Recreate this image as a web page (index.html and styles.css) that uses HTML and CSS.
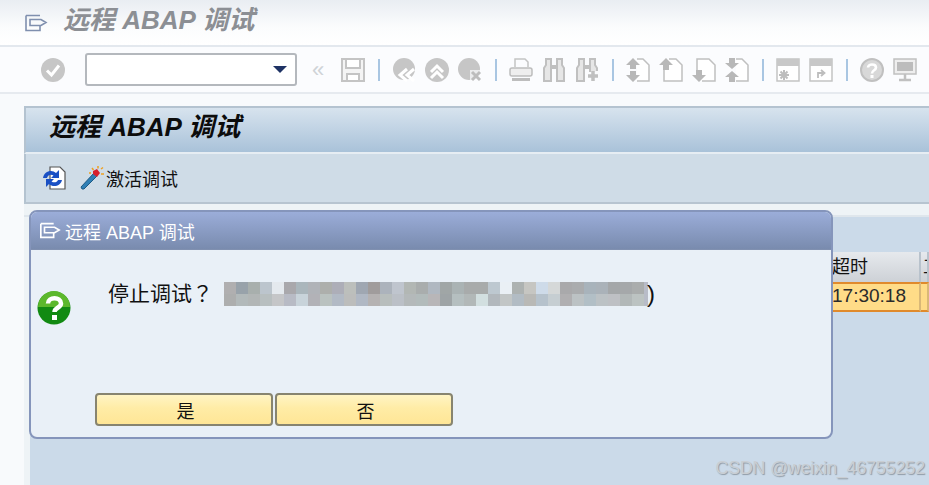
FILE: index.html
```html
<!DOCTYPE html>
<html lang="zh">
<head>
  <meta charset="UTF-8" />
  <title>远程 ABAP 调试</title>
  <link rel="stylesheet" href="styles.css">
</head>
<body>
  <div class="title-bar">
    <svg class="title-icon" viewBox="0 0 24 18" width="24" height="18"><path d="M2 1.5H16M2 1.5V16.5H16V12M6 5.500H17L22 8.500L17 11.500H6Z" fill="none" stroke="#7f8fae" stroke-width="1.600"/></svg>
    <span class="title-text">远程 ABAP 调试</span>
  </div>

  <div class="sys-toolbar">
    <svg class="tb" viewBox="0 0 24 24"><circle cx="12" cy="12" r="12" fill="#c6c6c6"/><path d="M6 12.500L10.500 17L18 7.500" fill="none" stroke="#fff" stroke-width="3"/></svg>
    <div class="combo"><span class="combo-arrow"></span></div>
    <span class="back-mark">«</span>
    <svg class="tb" viewBox="0 0 24 24"><path d="M1 1H23V23H1Z" fill="#f4f4f4" stroke="#c4c4c4" stroke-width="2"/><path d="M5 1H19V10H5ZM6 16H18V23H6Z" fill="#fff" stroke="#c4c4c4" stroke-width="2"/></svg>
    <span class="sep"></span>
    <svg class="tb" viewBox="0 0 24 24"><circle cx="12" cy="11" r="11" fill="#c6c6c6"/><path d="M15 11L8 17L15 23M22 11L15 17L22 23" fill="none" stroke="#fff" stroke-width="3"/></svg>
    <svg class="tb" viewBox="0 0 24 24"><circle cx="12" cy="12" r="12" fill="#c6c6c6"/><path d="M6 14L12 8L18 14M6 20L12 14L18 20" fill="none" stroke="#fff" stroke-width="3"/></svg>
    <svg class="tb" viewBox="0 0 24 24"><circle cx="11" cy="11" r="11" fill="#c6c6c6"/><path d="M12 12H24V24H12Z" fill="#fbfcfe" opacity="0.700"/><path d="M14 14L22 22M22 14L14 22" fill="none" stroke="#bdbdbd" stroke-width="3"/></svg>
    <span class="sep"></span>
    <svg class="tb" viewBox="0 0 24 24"><path d="M6 9V1H16L19 4V9" fill="none" stroke="#c4c4c4" stroke-width="1.500"/><rect x="1" y="10" width="22" height="8" rx="2" fill="#eee" stroke="#bdbdbd" stroke-width="1.500"/><rect x="3" y="20" width="18" height="3" fill="#bdbdbd"/></svg>
    <svg class="tb" viewBox="0 0 24 24"><path d="M2 23V10L4 7V1H9V23ZM15 23V1H20V7L22 10V23Z" fill="#e6e6e6" stroke="#c0c0c0" stroke-width="2"/><path d="M9 7H15V11H9Z" fill="#c0c0c0"/></svg>
    <svg class="tb" viewBox="0 0 24 24"><path d="M2 23V10L4 7V1H9V23ZM15 14V1H20V7L22 10V13" fill="#e6e6e6" stroke="#c0c0c0" stroke-width="2"/><path d="M9 7H15V11H9Z" fill="#c0c0c0"/><path d="M18 13V23M13 18H23" stroke="#c0c0c0" stroke-width="3.500"/></svg>
    <span class="sep"></span>
    <svg class="tb" viewBox="0 0 24 24"><path d="M11 1H17L23 7V23H11" fill="#fff" stroke="#c0c0c0" stroke-width="1.500"/><path d="M7 0L14 7H10V11H4V7H0ZM7 24L14 17H10V13H4V17H0Z" fill="#b8b8b8"/></svg>
    <svg class="tb" viewBox="0 0 24 24"><path d="M10 1H17L23 7V23H5V12" fill="#fff" stroke="#c0c0c0" stroke-width="1.500"/><path d="M7 0L14 7H10V12H4V7H0Z" fill="#b8b8b8"/></svg>
    <svg class="tb" viewBox="0 0 24 24"><path d="M5 12V1H17L23 7V23H10" fill="#fff" stroke="#c0c0c0" stroke-width="1.500"/><path d="M7 24L14 17H10V12H4V17H0Z" fill="#b8b8b8"/></svg>
    <svg class="tb" viewBox="0 0 24 24"><path d="M11 1H17L23 7V23H11" fill="#fff" stroke="#c0c0c0" stroke-width="1.500"/><path d="M7 11L14 5H10V0H4V5H0ZM7 13L14 19H10V24H4V19H0Z" fill="#b8b8b8"/></svg>
    <span class="sep"></span>
    <svg class="tb" viewBox="0 0 24 24"><path d="M1 1H23V23H1Z" fill="#fff" stroke="#c4c4c4" stroke-width="1.500"/><rect x="1" y="1" width="22" height="7" fill="#c8c8c8"/><path d="M8 12V22M3 17H13M4.500 13.500L11.500 20.500M11.500 13.500L4.500 20.500" stroke="#bdbdbd" stroke-width="2"/></svg>
    <svg class="tb" viewBox="0 0 24 24"><path d="M1 1H23V23H1Z" fill="#fff" stroke="#c4c4c4" stroke-width="1.500"/><rect x="1" y="1" width="22" height="7" fill="#c8c8c8"/><path d="M9 20V15H14M12 12L15.500 15L12 18" fill="none" stroke="#bdbdbd" stroke-width="1.800"/></svg>
    <span class="sep"></span>
    <svg class="tb" viewBox="0 0 24 24"><circle cx="12" cy="12" r="11" fill="#d8d8d8" stroke="#c0c0c0" stroke-width="2"/><path d="M8 9.500C8 5.500 16 5.500 16 9.500C16 12.500 12 12 12 15.500" fill="none" stroke="#fff" stroke-width="2.600"/><rect x="10.500" y="17" width="3" height="3" fill="#fff"/></svg>
    <svg class="tb" viewBox="0 0 24 24"><rect x="1" y="1" width="22" height="15" fill="#eee" stroke="#c0c0c0" stroke-width="1.500"/><path d="M4 4H10V13H4ZM10 4H20V13H10Z" fill="#bcbcbc"/><path d="M12 16V21M6 22H18" stroke="#c0c0c0" stroke-width="2.500"/></svg>
  </div>

  <main class="page">
    <section class="panel">
      <h1 class="panel-title">远程 ABAP 调试</h1>
      <div class="panel-tools">
        <svg class="tool-icon" viewBox="0 0 24 24"><path d="M8 1H18L23 6V23H8Z" fill="#fff" stroke="#555" stroke-width="1.200"/><path d="M1 12C2 5 10 3 14 7L17 4V12H9L11.500 9.500C9 8 6 8.500 5 12Z" fill="#1a50c4"/><path d="M20 14C19 20 11 22 7 18L4 21V13H12L9.500 15.500C12 17 15 16.500 16 14Z" fill="#1a50c4"/></svg>
        <svg class="tool-icon wand" viewBox="0 0 24 24"><path d="M2 23L1 21L14 7L17 10L4 23Z" fill="#2f7fb5" stroke="#1d5a85" stroke-width="1"/><path d="M13 5L17 3L20 7L17 11L13 8Z" fill="#d8202c"/><path d="M12 2L13.500 4M18 0V2.500M21 3L23 1.500M21 8H24M9 7H11" stroke="#f0a020" stroke-width="1.500"/></svg>
        <span class="tool-label">激活调试</span>
      </div>
      <div class="strip"></div>
      <div class="grid-area">
        <div class="grid-row grid-head">
          <span class="cell cell-main"></span>
          <span class="cell cell-time">超时</span>
          <span class="cell cell-next">工</span>
        </div>
        <div class="grid-row grid-sel">
          <span class="cell cell-main"></span>
          <span class="cell cell-time">17:30:18</span>
          <span class="cell cell-next"></span>
        </div>
      </div>
    </section>
  </main>

  <div class="dialog">
    <div class="dialog-head">
      <svg class="dialog-head-icon" viewBox="0 0 24 18" width="22" height="17"><path d="M2 1.500H16M2 1.500V16.500H16V12M6 5.500H17L22 8.500L17 11.500H6Z" fill="none" stroke="#fff" stroke-width="1.800"/></svg>
      <span>远程 ABAP 调试</span>
    </div>
    <div class="dialog-body">
      <div class="dialog-msg">
        <svg class="q-icon" viewBox="0 0 34 34" width="34" height="34"><circle cx="17" cy="17" r="16.500" fill="#128a12"/><path d="M1 16A16 16 0 0 1 33 16Z" fill="#5cb82c"/><path d="M11 12.500C11 5.500 24 5.500 24 12.500C24 17 17.500 16.500 17.500 21" fill="none" stroke="#fff" stroke-width="4.500"/><rect x="15" y="24" width="5" height="5" fill="#fff"/></svg>
        <p class="msg-text">停止调试<span lang="zh-TW">？</span></p>
        <svg class="mosaic" viewBox="0 0 428 24" width="428" height="24">
          <g><rect x="0" width="12" height="12" fill="#b0afb0"/><rect x="12" width="12" height="12" fill="#98a2aa"/><rect x="24" width="12" height="12" fill="#a8afad"/><rect x="36" width="12" height="12" fill="#bcc5cd"/><rect x="48" width="12" height="12" fill="#e4e9ee"/><rect x="60" width="12" height="12" fill="#a9a8ac"/><rect x="72" width="12" height="12" fill="#aab6bc"/><rect x="84" width="12" height="12" fill="#b0b3b8"/><rect x="96" width="12" height="12" fill="#adafac"/><rect x="108" width="12" height="12" fill="#adaeb8"/><rect x="120" width="12" height="12" fill="#bcbfbc"/><rect x="132" width="12" height="12" fill="#9fa7b2"/><rect x="144" width="12" height="12" fill="#a09c9c"/><rect x="156" width="12" height="12" fill="#acb3bc"/><rect x="168" width="12" height="12" fill="#bfc5ce"/><rect x="180" width="12" height="12" fill="#b2b7b4"/><rect x="192" width="12" height="12" fill="#a9adad"/><rect x="204" width="12" height="12" fill="#b0b8c1"/><rect x="216" width="12" height="12" fill="#a0a6a6"/><rect x="228" width="12" height="12" fill="#aab3b4"/><rect x="240" width="24" height="12" fill="#a8abab"/><rect x="264" width="12" height="12" fill="#bdc8d0"/><rect x="276" width="12" height="12" fill="#eaf0f5"/><rect x="288" width="12" height="12" fill="#adb2b1"/><rect x="300" width="12" height="12" fill="#c6c6c2"/><rect x="312" width="12" height="12" fill="#cedbe9"/><rect x="324" width="12" height="12" fill="#d5d8d8"/><rect x="336" width="12" height="12" fill="#a9a9ab"/><rect x="348" width="12" height="12" fill="#aaacae"/><rect x="360" width="12" height="12" fill="#a8b3bb"/><rect x="372" width="12" height="12" fill="#aab2b9"/><rect x="384" width="12" height="12" fill="#a4a7a9"/><rect x="396" width="12" height="12" fill="#a5a8aa"/><rect x="408" width="12" height="12" fill="#aaadad"/><rect x="420" width="4" height="12" fill="#b8bcc8"/></g>
          <g><rect x="0" y="12" width="12" height="12" fill="#adaeae"/><rect x="12" y="12" width="12" height="12" fill="#b2b9ba"/><rect x="24" y="12" width="12" height="12" fill="#b2b6b6"/><rect x="36" y="12" width="12" height="12" fill="#b8bfc0"/><rect x="48" y="12" width="12" height="12" fill="#c5c6c8"/><rect x="60" y="12" width="12" height="12" fill="#b8bbc5"/><rect x="72" y="12" width="12" height="12" fill="#c8d3da"/><rect x="84" y="12" width="12" height="12" fill="#b2b2b7"/><rect x="96" y="12" width="12" height="12" fill="#bac2c0"/><rect x="108" y="12" width="12" height="12" fill="#b2bac5"/><rect x="120" y="12" width="12" height="12" fill="#bcbdbc"/><rect x="132" y="12" width="12" height="12" fill="#b0b8c4"/><rect x="144" y="12" width="12" height="12" fill="#b5b2b2"/><rect x="156" y="12" width="12" height="12" fill="#b8bebd"/><rect x="168" y="12" width="12" height="12" fill="#bbc0c7"/><rect x="180" y="12" width="12" height="12" fill="#b4b9ba"/><rect x="192" y="12" width="12" height="12" fill="#b2bbbb"/><rect x="204" y="12" width="12" height="12" fill="#b8b6b8"/><rect x="216" y="12" width="12" height="12" fill="#9ea4a6"/><rect x="228" y="12" width="12" height="12" fill="#b5bfc0"/><rect x="240" y="12" width="12" height="12" fill="#b2b8b8"/><rect x="252" y="12" width="12" height="12" fill="#d2dfe0"/><rect x="264" y="12" width="12" height="12" fill="#b2b8bd"/><rect x="276" y="12" width="12" height="12" fill="#c2c6c6"/><rect x="288" y="12" width="12" height="12" fill="#b2bcc4"/><rect x="300" y="12" width="12" height="12" fill="#b9b9b6"/><rect x="312" y="12" width="12" height="12" fill="#b6c2cc"/><rect x="324" y="12" width="12" height="12" fill="#c6ced2"/><rect x="336" y="12" width="12" height="12" fill="#b0afb1"/><rect x="348" y="12" width="12" height="12" fill="#bcc2c4"/><rect x="360" y="12" width="12" height="12" fill="#b2bfc6"/><rect x="372" y="12" width="12" height="12" fill="#bcc2c5"/><rect x="384" y="12" width="12" height="12" fill="#bec0c4"/><rect x="396" y="12" width="12" height="12" fill="#b2b8b8"/><rect x="408" y="12" width="12" height="12" fill="#bcc3c2"/><rect x="420" y="12" width="4" height="12" fill="#b8bcc8"/></g>
        </svg>
        <span class="msg-end">)</span>
      </div>
      <div class="dialog-btns">
        <button class="sap-btn" type="button">是</button>
        <button class="sap-btn" type="button">否</button>
      </div>
    </div>
  </div>

  <div class="watermark">CSDN @weixin_46755252</div>
</body>
</html>
```

FILE: styles.css
```css
* {
  box-sizing: border-box;
}
html, body {
  height: 100%;
}
body {
  margin: 0;
  background: #f8fafc;
  font-family: "Liberation Sans", "Noto Sans CJK SC", sans-serif;
  overflow: hidden;
  position: relative;
}
.title-bar {
  height: 47px;
  display: flex;
  align-items: center;
  padding: 0 0 11px 24px;
  background: linear-gradient(#e9edf2, #fbfcfd 60%, #fff);
  border-bottom: 2px solid #e3e8ee;
}
.title-icon {
  margin-right: 15px;
  margin-top: 11px;
}
.title-text {
  font-size: 26px;
  font-weight: bold;
  font-style: italic;
  color: #8c8f94;
  white-space: pre;
}
.sys-toolbar {
  height: 47px;
  display: flex;
  align-items: center;
  gap: 9px;
  padding-left: 41px;
  background: #fbfcfe;
  border-bottom: 2px solid #e6eaef;
}
.tb {
  width: 24px;
  height: 24px;
  flex: none;
}
.combo {
  width: 212px;
  height: 33px;
  margin-left: 11px;
  flex: none;
  position: relative;
  background: #fff;
  border: 2px solid #b4b8bd;
  border-radius: 3px;
}
.combo-arrow {
  position: absolute;
  right: 8px;
  top: 11px;
  border-left: 7px solid transparent;
  border-right: 7px solid transparent;
  border-top: 7px solid #1e3264;
}
.back-mark {
  width: 14px;
  margin: 0 6px;
  font-size: 22px;
  line-height: 24px;
  color: #cfd3d7;
  flex: none;
}
.sep {
  width: 2px;
  height: 22px;
  margin: 0 3.5px;
  background: #a9c6e2;
  flex: none;
}
.page {
  padding: 12px 0 0 24px;
}
.panel {
  height: 391px;
  display: flex;
  flex-direction: column;
  background: #cbdae9;
  border-top: 2px solid #b4c3d0;
}
.panel-title {
  margin: 0;
  height: 46px;
  padding-left: 23px;
  font-size: 26px;
  line-height: 38px;
  font-weight: bold;
  font-style: italic;
  color: #0c0c0c;
  white-space: pre;
  background: linear-gradient(#d7e3ee, #a9c2d9);
  border-left: 2px solid #b4c3d0;
  border-bottom: 2px solid #e6edf3;
}
.panel-tools {
  height: 50px;
  display: flex;
  align-items: center;
  padding-left: 16px;
  background: #cfdce7;
  border-left: 2px solid #b4c3d0;
  border-bottom: 2px solid #b7c4d0;
}
.tool-icon {
  width: 24px;
  height: 24px;
  flex: none;
}
.wand {
  margin-left: 14px;
  height: 26px;
}
.tool-label {
  font-size: 18px;
  color: #111;
  margin-left: 2px;
}
.strip {
  height: 13px;
  flex: none;
  background: #eef3f6;
  border-bottom: 2px solid #dfe6ec;
}
.grid-area {
  flex: 1;
  padding-top: 35px;
  border-left: 6px solid #eef3f6;
}
.grid-row {
  display: flex;
  height: 30px;
}
.cell {
  flex: none;
  font-size: 18px;
  line-height: 30px;
  white-space: nowrap;
  overflow: hidden;
}
.cell-main {
  width: 800px;
}
.cell-time {
  width: 91px;
  padding-left: 2px;
  color: #111;
}
.cell-next {
  flex: 1;
  padding-left: 2px;
  color: #111;
}
.grid-head .cell-time,
.grid-head .cell-next {
  background: linear-gradient(#e6e9ed, #cdd1d6);
  border-right: 2px solid #b8c2cc;
}
.grid-sel .cell-time,
.grid-sel .cell-next {
  background: #ffdc88;
  border-top: 2px solid #e08a2c;
  border-bottom: 2px solid #e08a2c;
  border-right: 2px solid #d9b878;
  line-height: 24px;
  color: #2a2a2a;
  font-size: 19px;
}
.dialog {
  position: absolute;
  left: 29px;
  top: 210px;
  width: 804px;
  height: 229px;
  display: flex;
  flex-direction: column;
  border: 2px solid #8595bb;
  border-radius: 8px;
  overflow: hidden;
  background: #e9f0f7;
}
.dialog-head {
  height: 38px;
  display: flex;
  align-items: center;
  padding-left: 8px;
  gap: 4px;
  font-size: 18px;
  color: #fff;
  white-space: pre;
  background: linear-gradient(#9badd9, #798bae);
  border-bottom: 1px solid #8090b0;
}
.dialog-body {
  flex: 1;
  display: flex;
  flex-direction: column;
}
.dialog-msg {
  height: 143px;
  display: flex;
  align-items: flex-start;
  position: relative;
  padding: 29px 0 0 77px;
}
.q-icon {
  position: absolute;
  left: 6px;
  top: 41px;
}
.msg-text {
  margin: 0;
  width: 116px;
  font-family: "Noto Sans CJK TC", sans-serif;
  font-size: 21px;
  line-height: 26px;
  color: #111;
}
.mosaic {
  flex: none;
  margin-top: 3px;
}
.msg-end {
  font-size: 24px;
  line-height: 26px;
  margin-top: 2px;
  color: #111;
  margin-left: -5px;
}
.dialog-btns {
  display: flex;
  gap: 2px;
  padding-left: 64px;
}
.sap-btn {
  width: 178px;
  height: 33px;
  padding: 0 0 0 3px;
  font-family: "Noto Sans CJK SC", sans-serif;
  font-size: 18px;
  line-height: 28px;
  color: #111;
  background: linear-gradient(#fff4c4, #ffeca6 45%, #ffe696);
  border: 2px solid #87846f;
  border-radius: 4px;
}
.watermark {
  position: absolute;
  right: 4px;
  bottom: 6px;
  font-size: 17.6px;
  color: #c9ced3;
  text-shadow: 1px 1px 1px #8f9aa5;
}
```
